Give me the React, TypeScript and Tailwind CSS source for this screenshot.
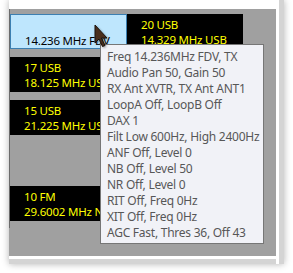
const tiles = [
  { name: '', freq: '14.236 MHz FDV', active: true },
  { name: '20 USB', freq: '14.329 MHz USB' },
  { name: '17 USB', freq: '18.125 MHz USB' },
  null,
  { name: '15 USB', freq: '21.225 MHz USB' },
  null,
  null,
  null,
  { name: '10 FM', freq: '29.6002 MHz NFM' },
  null,
]

const tipLines = [
  'Freq 14.236MHz FDV, TX',
  'Audio Pan 50, Gain 50',
  'RX Ant XVTR, TX Ant ANT1',
  'LoopA Off, LoopB Off',
  'DAX 1',
  'Filt Low 600Hz, High 2400Hz',
  'ANF Off, Level 0',
  'NB Off, Level 50',
  'NR Off, Level 0',
  'RIT Off, Freq 0Hz',
  'XIT Off, Freq 0Hz',
  'AGC Fast, Thres 36, Off 43',
]

function Tile({ t }: { t: { name: string; freq: string; active?: boolean } | null }) {
  if (!t) return <div className="h-[35px]" />
  return (
    <div
      className={`h-[35px] overflow-hidden whitespace-nowrap pl-[14px] pt-[3px] text-[11.5px] leading-[15px] tracking-[-0.2px] ${
        t.active ? 'border border-[#3c7fb1] bg-[#bee6fd] pl-[13px] pt-[2px] text-black' : 'bg-black text-[#ffff00]'
      }`}
    >
      <div className="h-[15px]">{t.name}</div>
      <div>{t.freq}</div>
    </div>
  )
}

export default function App() {
  return (
    <div className="min-h-[273px] bg-white pl-[9px] font-['Noto_Sans',sans-serif]">
      <div className="flex w-[275px] shadow-[0_0_7px_rgba(0,0,0,0.3)]">
        <div className="flex w-[267px] flex-col">
          <div className="h-[9px] bg-white" />
          <div className="relative h-[247px] bg-[#a0a0a0]">
            <div className="flex">
              <div className="h-[219px] w-px bg-[#6b6b6b]" />
              <div className="grid grid-cols-[117px_116px] gap-y-px pt-[5px]">
                {tiles.map((t, i) => (
                  <Tile key={i} t={t} />
                ))}
              </div>
            </div>

            {/* tooltip */}
            <div className="absolute left-[91px] top-[35px] h-[200px] w-[164px] border border-[#767676] bg-[#f1f2f7] pl-[6px] pt-[4px] text-[12px] leading-[16px] tracking-[-0.25px] text-[#575757]">
              {tipLines.map(l => (
                <div key={l} className="whitespace-nowrap">{l}</div>
              ))}
            </div>

            {/* mouse pointer */}
            <svg className="absolute left-[85px] top-[15px] drop-shadow-[1px_1px_1px_rgba(0,0,0,0.35)]" width="16" height="26" viewBox="0 0 16 26">
              <path d="M1 1 L1 19 L5 15 L8.5 22.5 L11 21.5 L7.5 14 L13 14 Z" fill="#4a2e1c" stroke="#1b120c" strokeWidth="1" strokeLinejoin="round" />
            </svg>
          </div>
          <div className="h-[3px] bg-white" />
          <div className="h-[5px] bg-[#d4d4d4]" />
        </div>
        <div className="w-[3px] bg-white" />
        <div className="w-[5px] bg-[#d4d4d4]" />
      </div>
    </div>
  )
}
